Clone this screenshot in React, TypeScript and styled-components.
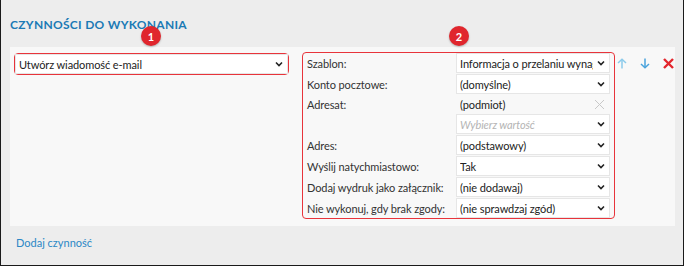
import { styled, createGlobalStyle } from "styled-components";

const GlobalStyle = createGlobalStyle`
  body {
    margin: 0;
    background: #ededed;
    font-family: Lato, "Noto Sans", sans-serif;
  }
`;

const Frame = styled.div`
  width: 684px;
  height: 266px;
  box-sizing: border-box;
  border: 1px solid #1a1a1a;
  border-top: none;
  background: #ededed;
  padding: 17px 8px 0 9px;
  display: flex;
  flex-direction: column;
`;

const Title = styled.h2`
  margin: 0 0 14px 0;
  font-size: 12px;
  line-height: 16px;
  font-weight: 700;
  color: #1b7ab5;
  letter-spacing: 0.3px;
`;

const Panel = styled.div`
  height: 179px;
  box-sizing: border-box;
  background: #f8f8f8;
  display: flex;
  align-items: flex-start;
  padding: 5px 2px 0 4px;
`;

const Marked = styled.div`
  position: relative;
  border: 1.5px solid #e8343b;
  border-radius: 4px;
`;

const Badge = styled.span<{ $left: number; $top: number }>`
  position: absolute;
  left: ${(p) => p.$left}px;
  top: ${(p) => p.$top}px;
  width: 20px;
  height: 20px;
  border-radius: 50%;
  background: #e0262d;
  color: #fff;
  font-size: 11px;
  font-weight: 700;
  display: flex;
  align-items: center;
  justify-content: center;
  box-shadow: 0 1px 2px rgba(0, 0, 0, 0.25);
`;

const Select = styled.div`
  height: 20px;
  box-sizing: border-box;
  background: #fff;
  border: 1px solid #e6e6e6;
  display: flex;
  align-items: center;
  padding: 0 4px 0 3px;
  font-size: 11px;
  letter-spacing: -0.1px;
  color: #222;
  gap: 4px;
`;

const Plain = styled(Select)`
  height: 18px;
  background: transparent;
  border-color: transparent;
`;

const Value = styled.span<{ $placeholder?: boolean }>`
  flex: 1;
  white-space: nowrap;
  overflow: hidden;
  color: ${(p) => (p.$placeholder ? "#b4b4b4" : "#222")};
  font-style: ${(p) => (p.$placeholder ? "italic" : "normal")};
`;

const LeftCol = styled.div`
  flex-shrink: 0;
  width: 275px;
  margin-right: 13px;
  padding-top: 1px;
`;

const Settings = styled(Marked)`
  flex-shrink: 0;
  width: 313px;
  box-sizing: border-box;
  padding: 0 4px 0 3px;
  display: grid;
  grid-template-columns: 150px 154px;
  row-gap: 1px;
`;

const Label = styled.div`
  font-size: 11px;
  letter-spacing: -0.1px;
  color: #333;
  display: flex;
  align-items: center;
  padding-left: 1px;
  white-space: nowrap;
`;

const Actions = styled.div`
  flex-shrink: 0;
  display: flex;
  gap: 13px;
  margin-left: 2px;
  padding-top: 6px;
`;

const Footer = styled.a`
  margin: 10px 0 0 6px;
  font-size: 11px;
  color: #2b88c6;
  text-decoration: none;
`;

const Chevron = () => (
  <svg width="8" height="6" viewBox="0 0 8 6">
    <polyline points="1,1.5 4,4.5 7,1.5" fill="none" stroke="#222" strokeWidth="1.6" />
  </svg>
);

const Clear = () => (
  <svg width="11" height="11" viewBox="0 0 11 11">
    <path d="M1 1 L10 10 M10 1 L1 10" stroke="#c8c8c8" strokeWidth="1" />
  </svg>
);

const Arrow = ({ up, color }: { up?: boolean; color: string }) => (
  <svg width="10" height="11" viewBox="0 0 10 11">
    <g transform={up ? undefined : "rotate(180 5 5.5)"} fill="none" stroke={color} strokeWidth="1.5">
      <path d="M5 10.5 V1.5" />
      <path d="M1 5 L5 1.2 L9 5" />
    </g>
  </svg>
);

const Cross = () => (
  <svg width="11" height="11" viewBox="0 0 11 11">
    <path d="M1 1 L10 10 M10 1 L1 10" stroke="#e3262d" strokeWidth="2.4" />
  </svg>
);

const rows: { label: string; value: string; kind?: "clear" | "placeholder" }[] = [
  { label: "Szablon:", value: "Informacja o przelaniu wynagrodzenia" },
  { label: "Konto pocztowe:", value: "(domyślne)" },
  { label: "Adresat:", value: "(podmiot)", kind: "clear" },
  { label: "", value: "Wybierz wartość", kind: "placeholder" },
  { label: "Adres:", value: "(podstawowy)" },
  { label: "Wyślij natychmiastowo:", value: "Tak" },
  { label: "Dodaj wydruk jako załącznik:", value: "(nie dodawaj)" },
  { label: "Nie wykonuj, gdy brak zgody:", value: "(nie sprawdzaj zgód)" },
];

export default function App() {
  return (
    <>
      <GlobalStyle />
      <Frame>
        <Title>CZYNNOŚCI DO WYKONANIA</Title>
        <Panel>
          <LeftCol>
            <Marked>
              <Badge $left={126} $top={-28}>1</Badge>
              <Select>
                <Value>Utwórz wiadomość e-mail</Value>
                <Chevron />
              </Select>
            </Marked>
          </LeftCol>
          <Settings>
            <Badge $left={146} $top={-27}>2</Badge>
            {rows.map((r, i) => [
              <Label key={`l${i}`}>{r.label}</Label>,
              r.kind === "clear" ? (
                <Plain key={`v${i}`}>
                  <Value>{r.value}</Value>
                  <Clear />
                </Plain>
              ) : (
                <Select key={`v${i}`}>
                  <Value $placeholder={r.kind === "placeholder"}>{r.value}</Value>
                  <Chevron />
                </Select>
              ),
            ])}
          </Settings>
          <Actions>
            <Arrow up color="#8ccbeb" />
            <Arrow color="#4aa3dc" />
            <Cross />
          </Actions>
        </Panel>
        <Footer href="#">Dodaj czynność</Footer>
      </Frame>
    </>
  );
}
